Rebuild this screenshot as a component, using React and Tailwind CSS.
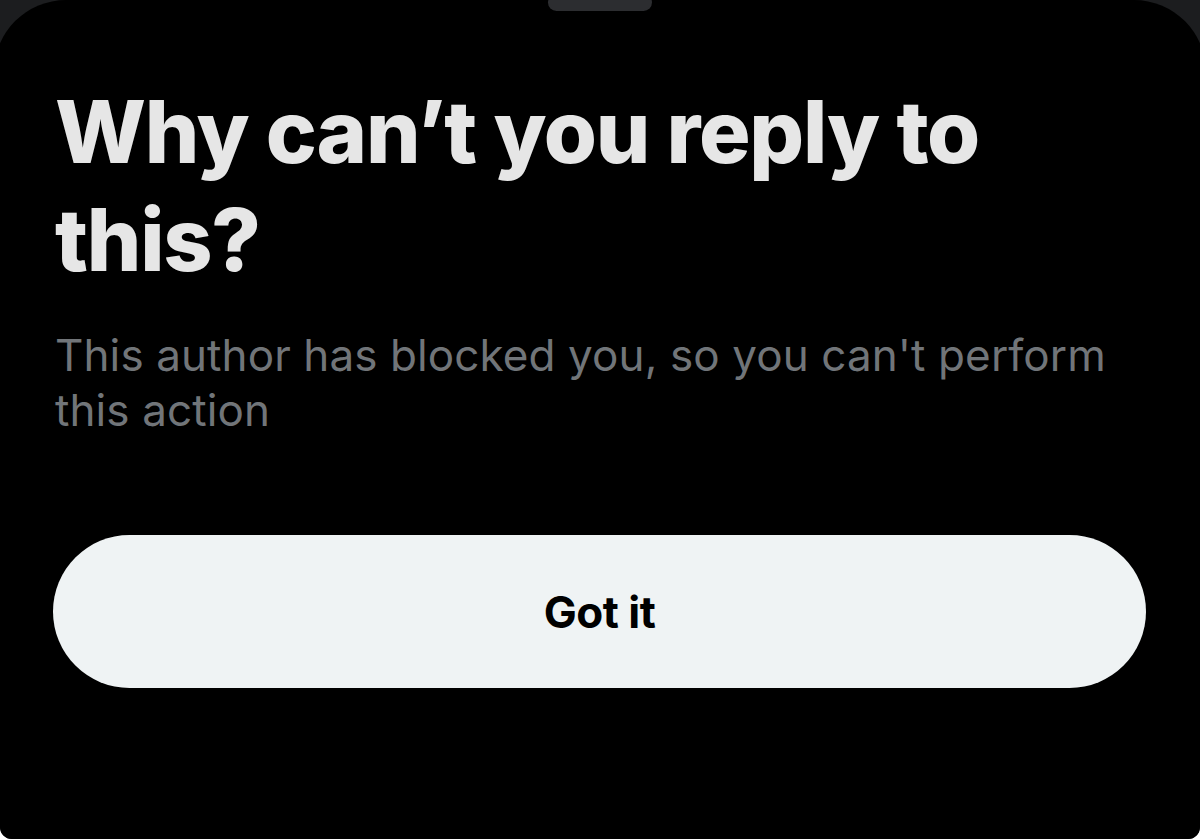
import React from 'react';

function App() {
  return (
    <div className="h-[839px] w-[1200px] overflow-hidden bg-white" style={{ fontFamily: 'Inter, "Noto Sans", sans-serif' }}>
      <div className="h-full rounded-b-[12px] bg-[#1c1d1f] overflow-hidden">
        {/* sheet */}
        <div className="relative h-full -mx-[6px] rounded-t-[72px] bg-black px-[61px] pt-[78px]">
          {/* grab handle */}
          <div className="absolute left-1/2 -top-[6px] h-[17px] w-[104px] -translate-x-1/2 rounded-full bg-[#2c2d30]" />

          <h1 className="text-[86px] font-extrabold leading-[108px] tracking-[-1.3px] text-[#e6e6e6]">
            Why can’t you reply to this?
          </h1>
          <p className="mt-[34px] text-[44px] leading-[55px] tracking-[0.1px] text-[#717579]">
            This author has blocked you, so you can't perform this action
          </p>

          <button className="mt-[97px] flex h-[153px] w-[1093px] -ml-[2px] items-center justify-center rounded-full bg-[#eff3f4] text-[44px] font-bold tracking-[-0.5px] text-black">
            Got it
          </button>
        </div>
      </div>
    </div>
  );
}

export default App;
